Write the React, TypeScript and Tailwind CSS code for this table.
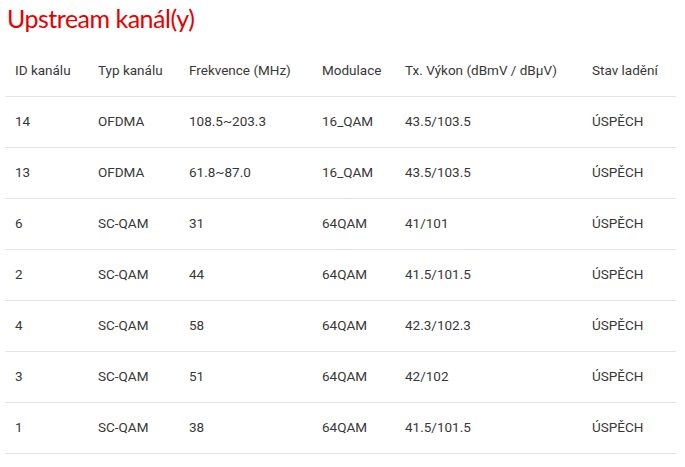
const rows = [
  ['14', 'OFDMA', '108.5~203.3', '16_QAM', '43.5/103.5', 'ÚSPĚCH'],
  ['13', 'OFDMA', '61.8~87.0', '16_QAM', '43.5/103.5', 'ÚSPĚCH'],
  ['6', 'SC-QAM', '31', '64QAM', '41/101', 'ÚSPĚCH'],
  ['2', 'SC-QAM', '44', '64QAM', '41.5/101.5', 'ÚSPĚCH'],
  ['4', 'SC-QAM', '58', '64QAM', '42.3/102.3', 'ÚSPĚCH'],
  ['3', 'SC-QAM', '51', '64QAM', '42/102', 'ÚSPĚCH'],
  ['1', 'SC-QAM', '38', '64QAM', '41.5/101.5', 'ÚSPĚCH'],
];

const headers = ['ID kanálu', 'Typ kanálu', 'Frekvence (MHz)', 'Modulace', 'Tx. Výkon (dBmV / dBµV)', 'Stav ladění'];
const widths = ['w-[83px]', 'w-[91px]', 'w-[133px]', 'w-[83px]', 'w-[187px]', 'w-[94px]'];

export default function App() {
  return (
    <div className="w-[685px] h-[467px] bg-white overflow-hidden font-['Roboto',sans-serif]">
      <h2 className="h-[45px] pl-[7px] pt-[2px] font-['Lato',sans-serif] tracking-[-0.5px] text-[25px] leading-[33px] text-[#e60000]">Upstream kanál(y)</h2>
      <table className="ml-[5px] w-[671px] table-fixed border-collapse text-[13.5px] text-[#383838]">
        <thead>
          <tr className="h-[51px] border-b border-[#e4e4e4]">
            {headers.map((h, i) => (
              <th key={h} className={`${widths[i]} pl-[10px] text-left font-normal`}>{h}</th>
            ))}
          </tr>
        </thead>
        <tbody>
          {rows.map((r) => (
            <tr key={r[0]} className="h-[51px] border-b border-[#e4e4e4]">
              {r.map((c, i) => (
                <td key={i} className="pl-[10px]">{c}</td>
              ))}
            </tr>
          ))}
        </tbody>
      </table>
    </div>
  );
}
